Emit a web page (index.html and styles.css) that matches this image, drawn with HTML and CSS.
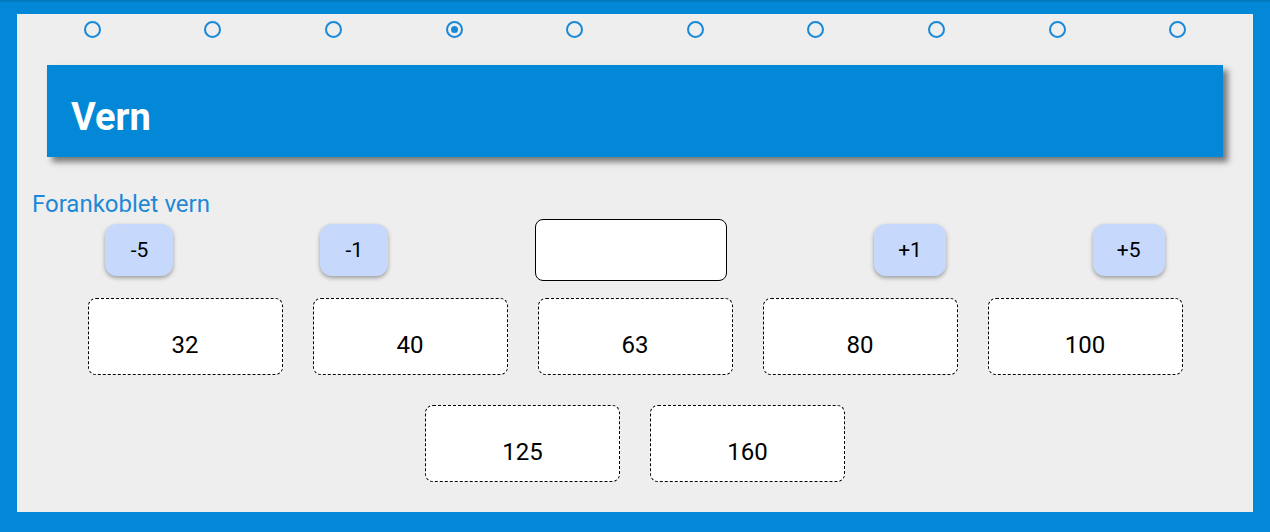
FILE: index.html
```html
<!DOCTYPE html>
<html>
<head>
  <title>Vern</title>
  <link rel="stylesheet" href="styles.css">
</head>
<body>
  <div class="panel">

    <!-- Step indicator -->
    <div class="steps">
      <span class="dot"></span>
      <span class="dot"></span>
      <span class="dot"></span>
      <span class="dot checked"></span>
      <span class="dot"></span>
      <span class="dot"></span>
      <span class="dot"></span>
      <span class="dot"></span>
      <span class="dot"></span>
      <span class="dot"></span>
    </div>

    <div class="header">
      <h1>Vern</h1>
    </div>

    <div class="label">Forankoblet vern</div>

    <!-- Adjust buttons and value input -->
    <div class="controls">
      <button class="step-button">-5</button>
      <button class="step-button">-1</button>
      <input type="text" class="value-input">
      <button class="step-button">+1</button>
      <button class="step-button">+5</button>
    </div>

    <!-- Preset values -->
    <div class="values">
      <div class="value-card">32</div>
      <div class="value-card">40</div>
      <div class="value-card">63</div>
      <div class="value-card">80</div>
      <div class="value-card">100</div>
      <div class="value-card">125</div>
      <div class="value-card">160</div>
    </div>

  </div>
</body>
</html>
```

FILE: styles.css
```css
body {
  font-family: 'Roboto', 'Noto Sans', sans-serif;
  background-color: #0288d7;
  border-top: 2px solid #0379c2;
  margin: 0;
  height: 530px;
  overflow: hidden;
}
.panel {
  background-color: #eeeeee;
  margin: 12px 17px 0 17px;
  height: 498px;
  padding: 0 15px;
  box-sizing: border-box;
}
.steps {
  display: grid;
  grid-template-columns: repeat(10, 1fr);
  justify-items: center;
  align-items: center;
  height: 30px;
}
.dot {
  width: 17px;
  height: 17px;
  border: 2px solid #1888d8;
  border-radius: 50%;
  box-sizing: border-box;
  display: flex;
  align-items: center;
  justify-content: center;
}
.dot.checked::after {
  content: '';
  width: 7px;
  height: 7px;
  border-radius: 50%;
  background-color: #1888d8;
}
.header {
  background-color: #0288d7;
  margin: 21px 15px 0 15px;
  height: 92px;
  padding: 12px 24px 0 24px;
  box-sizing: border-box;
  display: flex;
  align-items: center;
  box-shadow: 5px 5px 6px #7a7a7a;
}
.header h1 {
  margin: 0;
  color: #fff;
  font-size: 38px;
  font-weight: bold;
}
.label {
  margin-top: 33px;
  font-size: 24px;
  line-height: 28px;
  color: #1e88d6;
}
.controls {
  display: flex;
  justify-content: space-around;
  align-items: center;
  margin-top: 1px;
}
.step-button {
  font-family: 'Roboto', sans-serif;
  font-size: 21px;
  color: #000;
  background-color: #c6d9fd;
  border: none;
  border-radius: 12px;
  height: 52px;
  min-width: 68px;
  padding: 0 24px;
  box-shadow: 0 2px 4px rgba(0, 0, 0, 0.35);
  cursor: pointer;
}
.value-input {
  width: 192px;
  height: 62px;
  box-sizing: border-box;
  border: 1px solid #000;
  border-radius: 8px;
  background-color: #fff;
  font-family: 'Roboto', sans-serif;
  font-size: 20px;
}
.values {
  display: flex;
  flex-wrap: wrap;
  justify-content: center;
  gap: 30px;
  margin-top: 17px;
}
.value-card {
  width: 195px;
  height: 77px;
  box-sizing: border-box;
  border: 1px dashed #000;
  border-radius: 8px;
  background-color: #fff;
  font-size: 24px;
  display: flex;
  align-items: center;
  justify-content: center;
  padding-top: 16px;
}
```
